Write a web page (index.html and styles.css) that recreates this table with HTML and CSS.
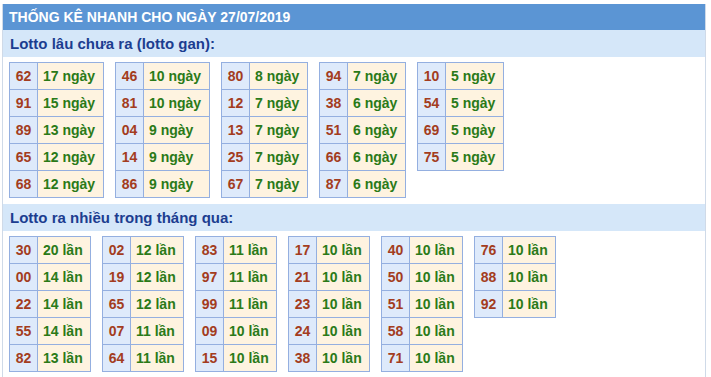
FILE: index.html
```html
<!DOCTYPE html>
<html lang="vi">
<head>
<meta charset="utf-8">
<title>Thống kê nhanh</title>
<link rel="stylesheet" href="styles.css">
</head>
<body>
<div class="wrap">
  <div class="hdr">THỐNG KÊ NHANH CHO NGÀY 27/07/2019</div>
  <div class="sub">Lotto lâu chưa ra (lotto gan):</div>
  <div class="grid">
    <table class="t d2"><tr><td class="n">62</td><td class="v">17 ngày</td></tr><tr><td class="n">91</td><td class="v">15 ngày</td></tr><tr><td class="n">89</td><td class="v">13 ngày</td></tr><tr><td class="n">65</td><td class="v">12 ngày</td></tr><tr><td class="n">68</td><td class="v">12 ngày</td></tr></table>
    <table class="t d2"><tr><td class="n">46</td><td class="v">10 ngày</td></tr><tr><td class="n">81</td><td class="v">10 ngày</td></tr><tr><td class="n">04</td><td class="v">9 ngày</td></tr><tr><td class="n">14</td><td class="v">9 ngày</td></tr><tr><td class="n">86</td><td class="v">9 ngày</td></tr></table>
    <table class="t d1"><tr><td class="n">80</td><td class="v">8 ngày</td></tr><tr><td class="n">12</td><td class="v">7 ngày</td></tr><tr><td class="n">13</td><td class="v">7 ngày</td></tr><tr><td class="n">25</td><td class="v">7 ngày</td></tr><tr><td class="n">67</td><td class="v">7 ngày</td></tr></table>
    <table class="t d1"><tr><td class="n">94</td><td class="v">7 ngày</td></tr><tr><td class="n">38</td><td class="v">6 ngày</td></tr><tr><td class="n">51</td><td class="v">6 ngày</td></tr><tr><td class="n">66</td><td class="v">6 ngày</td></tr><tr><td class="n">87</td><td class="v">6 ngày</td></tr></table>
    <table class="t d1"><tr><td class="n">10</td><td class="v">5 ngày</td></tr><tr><td class="n">54</td><td class="v">5 ngày</td></tr><tr><td class="n">69</td><td class="v">5 ngày</td></tr><tr><td class="n">75</td><td class="v">5 ngày</td></tr></table>
  </div>
  <div class="sub">Lotto ra nhiều trong tháng qua:</div>
  <div class="grid">
    <table class="t ln"><tr><td class="n">30</td><td class="v">20 lần</td></tr><tr><td class="n">00</td><td class="v">14 lần</td></tr><tr><td class="n">22</td><td class="v">14 lần</td></tr><tr><td class="n">55</td><td class="v">14 lần</td></tr><tr><td class="n">82</td><td class="v">13 lần</td></tr></table>
    <table class="t ln"><tr><td class="n">02</td><td class="v">12 lần</td></tr><tr><td class="n">19</td><td class="v">12 lần</td></tr><tr><td class="n">65</td><td class="v">12 lần</td></tr><tr><td class="n">07</td><td class="v">11 lần</td></tr><tr><td class="n">64</td><td class="v">11 lần</td></tr></table>
    <table class="t ln"><tr><td class="n">83</td><td class="v">11 lần</td></tr><tr><td class="n">97</td><td class="v">11 lần</td></tr><tr><td class="n">99</td><td class="v">11 lần</td></tr><tr><td class="n">09</td><td class="v">10 lần</td></tr><tr><td class="n">15</td><td class="v">10 lần</td></tr></table>
    <table class="t ln"><tr><td class="n">17</td><td class="v">10 lần</td></tr><tr><td class="n">21</td><td class="v">10 lần</td></tr><tr><td class="n">23</td><td class="v">10 lần</td></tr><tr><td class="n">24</td><td class="v">10 lần</td></tr><tr><td class="n">38</td><td class="v">10 lần</td></tr></table>
    <table class="t ln"><tr><td class="n">40</td><td class="v">10 lần</td></tr><tr><td class="n">50</td><td class="v">10 lần</td></tr><tr><td class="n">51</td><td class="v">10 lần</td></tr><tr><td class="n">58</td><td class="v">10 lần</td></tr><tr><td class="n">71</td><td class="v">10 lần</td></tr></table>
    <table class="t ln"><tr><td class="n">76</td><td class="v">10 lần</td></tr><tr><td class="n">88</td><td class="v">10 lần</td></tr><tr><td class="n">92</td><td class="v">10 lần</td></tr></table>
  </div>
</div>
</body>
</html>
```

FILE: styles.css
```css
html, body {
  margin: 0;
  padding: 0;
  background: #ffffff;
}
body {
  font-family: "Liberation Sans", Arial, sans-serif;
}
.wrap {
  margin: 4px 0 0 2px;
  width: 702px;
  border-left: 1px solid #cfdae8;
  border-right: 1px solid #cfdae8;
}
.hdr {
  height: 26px;
  line-height: 26px;
  background: #5b95d4;
  color: #ffffff;
  font-size: 14px;
  font-weight: bold;
  padding-left: 6px;
}
.sub {
  height: 27px;
  line-height: 27px;
  background: #d5e7f9;
  color: #1c3d90;
  font-size: 15px;
  font-weight: bold;
  padding-left: 7px;
}
.grid {
  display: flex;
  align-items: flex-start;
  gap: 11px;
  padding: 5px 6px 6px;
}
.t {
  border-collapse: collapse;
  font-size: 14px;
  font-weight: bold;
}
.t td {
  border: 1px solid #94afe0;
  line-height: 26px;
  padding: 0;
  white-space: nowrap;
}
.t .n {
  width: 27px;
  text-align: center;
  background: #deeafb;
  color: #a33c20;
}
.t .v {
  text-align: left;
  padding-left: 5px;
  background: #fef3e0;
  color: #2a7a18;
}
.d2 .v {
  width: 60px;
}
.d1 .v {
  width: 52px;
}
.ln .v {
  width: 47px;
}
```
